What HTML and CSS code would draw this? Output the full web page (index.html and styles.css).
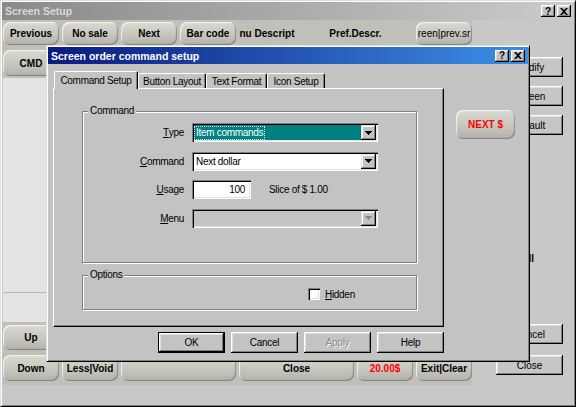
FILE: index.html
```html
<!DOCTYPE html>
<html lang="en">
<head>
<meta charset="utf-8">
<title>Screen Setup</title>
<link rel="stylesheet" href="styles.css">
</head>
<body>
<div class="win">
  <div class="titlebar inactive">
    <span class="title">Screen Setup</span>
    <div class="tbtns">
      <span class="tb">?</span>
      <span class="tb"><svg width="8" height="7" viewBox="0 0 8 7"><path d="M0 0h2l2 2 2-2h2L5 3.5 8 7H6L4 5 2 7H0l3-3.5z"/></svg></span>
    </div>
  </div>
  <div class="main">
    <div class="leftcol">
      <div class="strip row1">
        <div class="pb">Previous</div>
        <div class="pb">No sale</div>
        <div class="pb">Next</div>
        <div class="pb">Bar code</div>
        <div class="pb flat">nu Descript</div>
        <div class="pb flat wide">Pref.Descr.</div>
        <div class="pb thin">reen|prev.sr</div>
      </div>
      <div class="strip row2">
        <div class="pb">CMD</div>
      </div>
      <div class="listpanel">
        <div class="lp-top"></div>
        <div class="lp-bottom"></div>
      </div>
      <div class="strip bottomstrip">
        <div class="brow">
          <div class="pb">Up</div>
        </div>
        <div class="brow">
          <div class="pb">Down</div>
          <div class="pb">Less|Void</div>
          <div class="pb wide"></div>
          <div class="pb wide">Close</div>
          <div class="pb red">20.00$</div>
          <div class="pb">Exit|Clear</div>
        </div>
      </div>
    </div>
    <div class="rightcol">
      <div class="wbtn rb rb-modify">Modify</div>
      <div class="wbtn rb rb-next">Screen</div>
      <div class="wbtn rb rb-next">Default</div>
      <div class="rall">all</div>
      <div class="wbtn rb rb-cancel">Cancel</div>
      <div class="wbtn rb rb-close">Close</div>
    </div>
  </div>

  <div class="dialog">
    <div class="titlebar active">
      <span class="title">Screen order command setup</span>
      <div class="tbtns">
        <span class="tb">?</span>
        <span class="tb"><svg width="8" height="7" viewBox="0 0 8 7"><path d="M0 0h2l2 2 2-2h2L5 3.5 8 7H6L4 5 2 7H0l3-3.5z"/></svg></span>
      </div>
    </div>
    <div class="dbody">
      <div class="tabcol">
        <div class="tabs">
          <div class="tab sel w-cs">Command Setup</div>
          <div class="tab w-bl">Button Layout</div>
          <div class="tab w-tf">Text Format</div>
          <div class="tab w-is">Icon Setup</div>
        </div>
        <div class="tabpanel">
          <div class="group cmdgroup">
            <span class="cap">Command</span>
            <div class="form">
              <span class="lbl"><u>T</u>ype</span>
              <div class="combo">
                <div class="cval selval"><span class="focus">Item commands</span></div>
                <div class="cbtn"><svg width="7" height="4" viewBox="0 0 7 4"><path d="M0 0h7v1H6v1H5v1H4v1H3V3H2V2H1V1H0z"/></svg></div>
              </div>
              <span class="lbl"><u>C</u>ommand</span>
              <div class="combo">
                <div class="cval">Next dollar</div>
                <div class="cbtn"><svg width="7" height="4" viewBox="0 0 7 4"><path d="M0 0h7v1H6v1H5v1H4v1H3V3H2V2H1V1H0z"/></svg></div>
              </div>
              <span class="lbl"><u>U</u>sage</span>
              <div class="usage">
                <div class="input">100</div>
                <span class="slice">Slice of $ 1.00</span>
              </div>
              <span class="lbl"><u>M</u>enu</span>
              <div class="combo disabled">
                <div class="cval"></div>
                <div class="cbtn"><svg width="7" height="4" viewBox="0 0 7 4"><path d="M0 0h7v1H6v1H5v1H4v1H3V3H2V2H1V1H0z"/></svg></div>
              </div>
            </div>
          </div>
          <div class="group optgroup">
            <span class="cap">Options</span>
            <div class="chk"><span class="box"></span><span><u>H</u>idden</span></div>
          </div>
        </div>
        <div class="dbuttons">
          <div class="wbtn dbtn default">OK</div>
          <div class="wbtn dbtn">Cancel</div>
          <div class="wbtn dbtn dis">Apply</div>
          <div class="wbtn dbtn">Help</div>
        </div>
      </div>
      <div class="preview">
        <div class="pb nextbtn">NEXT $</div>
      </div>
    </div>
  </div>
</div>
</body>
</html>
```

FILE: styles.css
```css
* { box-sizing: border-box; }
html, body { margin: 0; padding: 0; }
body {
  font-family: "Liberation Sans", Arial, sans-serif;
  font-size: 10px;
  color: #000;
  background: #c8c8c8;
}

.win {
  position: relative;
  width: 576px;
  height: 407px;
  background: #c8c8c8;
  border: 1px solid;
  border-color: #dfdfdf #000 #000 #dfdfdf;
  box-shadow: inset 1px 1px #fff, inset -1px -1px #808080;
  padding: 1px;
  display: flex;
  flex-direction: column;
  overflow: hidden;
}

/* title bars */
.titlebar {
  display: flex;
  align-items: center;
  justify-content: space-between;
  flex: none;
  padding-right: 3px;
}
.titlebar .title {
  font-weight: bold;
  font-size: 10.5px;
  letter-spacing: 0;
  padding-left: 3px;
  white-space: nowrap;
}
.titlebar.inactive {
  height: 18px;
  background: linear-gradient(90deg, #8a8a8a, #cbcbcb);
  color: #d8d8d8;
}
.titlebar.active {
  height: 17px;
  background: linear-gradient(90deg, #0a1a7e, #3d8fe6);
  color: #fff;
}
.tbtns { display: flex; gap: 2px; }
.tb {
  width: 14px;
  height: 12px;
  background: #c3c3c3;
  box-shadow: inset -1px -1px #000, inset 1px 1px #fff, inset -2px -2px #808080, inset 2px 2px #dfdfdf;
  display: flex;
  align-items: center;
  justify-content: center;
  color: #000;
  font-weight: bold;
  font-size: 10px;
  letter-spacing: 0;
}

/* main outer content */
.main {
  flex: 1;
  display: grid;
  grid-template-columns: 470px 1fr;
}
.leftcol { display: flex; flex-direction: column; }
.strip {
  background: #c0c0b8;
  display: flex;
  gap: 3px;
  padding-left: 1px;
}
.row1 { height: 27px; padding-top: 2px; }
.row2 { height: 31px; padding-top: 3px; }

.pb {
  width: 56px;
  height: 23px;
  flex: none;
  border-radius: 7px;
  background: linear-gradient(#dadad2, #c6c6be 55%, #b2b2aa);
  box-shadow: inset -1px -1px 1px rgba(0,0,0,.28), inset 1px 1px 1px rgba(255,255,255,.75);
  display: flex;
  align-items: center;
  justify-content: center;
  font-weight: bold;
  white-space: nowrap;
  overflow: hidden;
}
.row2 .pb { height: 26px; }
.pb.flat {
  background: none;
  box-shadow: none;
  overflow: visible;
}
.row1 .pb.flat:first-of-type { justify-content: flex-start; }
.pb.wide { width: 115px; }
.pb.thin { font-weight: normal; }
.red { color: #f00; }

.listpanel {
  height: 244px;
  display: flex;
  flex-direction: column;
  padding-left: 1px;
}
.lp-top {
  height: 215px;
  width: 44px;
  background: #e4e4e4;
  border-right: 1px solid #cfcfcf;
  border-bottom: 1px solid #b8b8b8;
}
.lp-bottom {
  flex: 1;
  width: 44px;
  background: #e4e4e4;
  border-right: 1px solid #cfcfcf;
}
.bottomstrip {
  height: 63px;
  flex-direction: column;
  gap: 5px;
  padding-top: 3px;
}
.brow { display: flex; gap: 3px; }
.brow .pb { height: 25px; }
.brow + .brow .pb { height: 26px; }

/* right column of classic buttons */
.rightcol {
  display: flex;
  flex-direction: column;
  align-items: flex-start;
  padding-left: 24px;
}
.wbtn {
  background: #c6c6c6;
  box-shadow: inset -1px -1px #000, inset 1px 1px #fff, inset -2px -2px #808080, inset 2px 2px #dfdfdf;
  display: flex;
  align-items: center;
  justify-content: center;
}
.rb { width: 67px; height: 20px; }
.rb-modify { margin-top: 37px; }
.rb-next { margin-top: 9px; }
.rall {
  margin-top: 117px;
  margin-left: 27px;
  font-weight: bold;
  line-height: 13px;
}
.rb-cancel { margin-top: 59px; }
.rb-close { margin-top: 11px; }

/* dialog */
.dialog {
  position: absolute;
  left: 45px;
  top: 44px;
  width: 484px;
  height: 317px;
  background: #c3c3c3;
  border: 1px solid;
  border-color: #dfdfdf #000 #000 #dfdfdf;
  box-shadow: inset 1px 1px #fff, inset -1px -1px #808080;
  padding: 1px;
  display: flex;
  flex-direction: column;
  letter-spacing: -0.3px;
}
.dbody {
  display: grid;
  grid-template-columns: 391px 1fr;
  padding-left: 5px;
  padding-top: 7px;
}
.tabs {
  display: flex;
  align-items: flex-end;
  height: 17px;
  margin-left: 1px;
}
.tab {
  height: 15px;
  border-top: 1px solid #fff;
  border-left: 1px solid #fff;
  border-right: 1px solid #000;
  box-shadow: inset -1px 0 #808080;
  border-radius: 2px 2px 0 0;
  display: flex;
  align-items: center;
  justify-content: center;
  white-space: nowrap;
  background: #c3c3c3;
}
.tab.sel {
  height: 18px;
  margin-bottom: -1px;
  position: relative;
  z-index: 1;
  padding-bottom: 1px;
}
.w-cs { width: 84px; }
.w-bl { width: 68px; }
.w-tf { width: 61px; }
.w-is { width: 58px; }

.tabpanel {
  height: 239px;
  border: 1px solid;
  border-color: #fff #000 #000 #fff;
  box-shadow: inset -1px -1px #808080;
  padding: 22px 0 0 28px;
}

.group {
  position: relative;
  width: 335px;
  border: 1px solid #808080;
  box-shadow: 1px 1px #fff, inset 1px 1px #fff;
}
.group .cap {
  position: absolute;
  top: -7px;
  left: 5px;
  padding: 0 2px;
  line-height: 12px;
  background: #c3c3c3;
}
.cmdgroup { height: 152px; }
.optgroup {
  height: 35px;
  margin-top: 12px;
  display: flex;
  align-items: center;
  padding: 3px 0 0 225px;
}

.form {
  display: grid;
  grid-template-columns: 101px 186px;
  grid-auto-rows: 19px;
  column-gap: 8px;
  row-gap: 9.5px;
  padding-top: 11px;
}
.lbl {
  display: flex;
  align-items: center;
  justify-content: flex-end;
}
.combo {
  display: flex;
  padding: 2px;
  background: #fff;
  box-shadow: inset 1px 1px #808080, inset 2px 2px #000, inset -1px -1px #fff, inset -2px -2px #dfdfdf;
}
.cval {
  flex: 1;
  display: flex;
  align-items: center;
  padding-left: 2px;
  white-space: nowrap;
}
.selval {
  background: #008080;
  color: #fff;
  padding-left: 1px;
}
.focus {
  outline: 1px dotted #d0f0f0;
  outline-offset: 0;
  padding: 0 1px;
  line-height: 12px;
}
.cbtn {
  width: 15px;
  flex: none;
  background: #c3c3c3;
  box-shadow: inset -1px -1px #000, inset 1px 1px #dfdfdf, inset -2px -2px #808080, inset 2px 2px #fff;
  display: flex;
  align-items: center;
  justify-content: center;
}
.combo.disabled { background: #c3c3c3; }
.combo.disabled .cbtn svg { fill: #8a8a8a; }

.usage { display: flex; align-items: center; }
.input {
  width: 59px;
  height: 19px;
  background: #fff;
  box-shadow: inset 1px 1px #808080, inset 2px 2px #000, inset -1px -1px #fff, inset -2px -2px #dfdfdf;
  display: flex;
  align-items: center;
  justify-content: flex-end;
  padding-right: 6px;
}
.slice { margin-left: 18px; }

.chk { display: flex; align-items: center; }
.box {
  width: 12px;
  height: 12px;
  background: #fff;
  box-shadow: inset 1px 1px #808080, inset 2px 2px #000, inset -1px -1px #fff, inset -2px -2px #dfdfdf;
  margin-right: 5px;
}

.dbuttons {
  display: flex;
  justify-content: flex-end;
  gap: 6px;
  margin-top: 5px;
}
.dbtn { width: 67px; height: 21px; background: #c3c3c3; }
.dbtn.default { border: 1px solid #000; }
.dbtn.dis { color: #8a8a8a; text-shadow: 1px 1px #fff; }

.preview { padding: 39px 0 0 12px; }
.nextbtn {
  width: 59px;
  height: 29px;
  color: #f00;
  letter-spacing: 0;
}
```
